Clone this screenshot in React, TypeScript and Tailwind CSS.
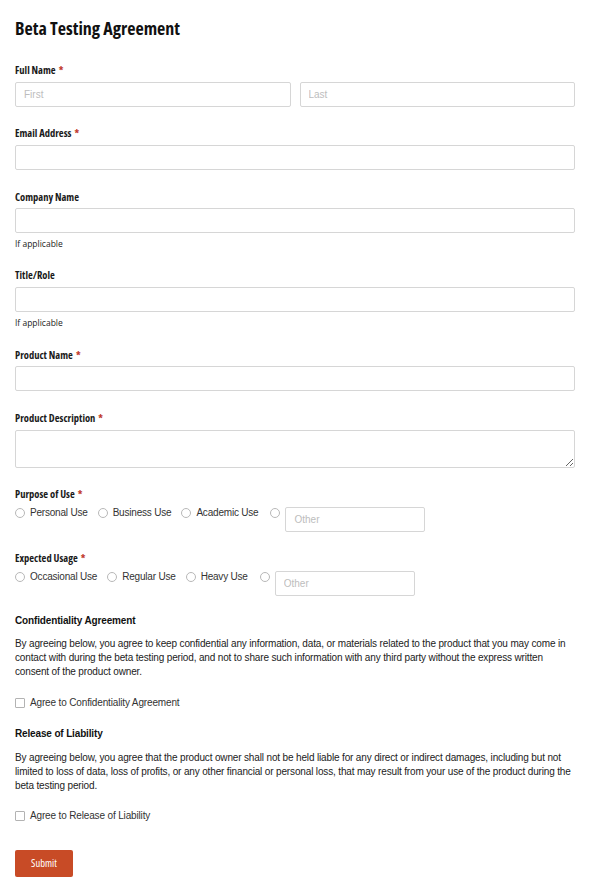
import React from "react";

const labelCls =
  "block text-[10.5px] leading-[16px] font-bold text-[#1a1a1a] [font-family:'Open_Sans',sans-serif] [font-stretch:75%]";
const inputCls =
  "block h-[25px] w-full rounded-[2px] border border-[#d6d6d6] bg-white px-[8px] text-[10px] text-[#333] outline-none placeholder:text-[#bdbdbd] [font-family:'Liberation_Sans',Arial,sans-serif]";
const bodyFont = "[font-family:'Liberation_Sans',Arial,sans-serif] tracking-[-0.2px]";
const paraFont = "[font-family:'Liberation_Sans',Arial,sans-serif] tracking-[-0.15px]";

function Req() {
  return <span className="ml-[3px] text-[#c0392b]">*</span>;
}

function Radio({ label }: { label: string }) {
  return (
    <label className={`flex items-center gap-[5px] text-[10px] leading-[14px] text-[#333] ${bodyFont}`}>
      <span className="inline-block h-[10px] w-[10px] rounded-full border border-[#b8b8b8] bg-white" />
      <span>{label}</span>
    </label>
  );
}

function Check({ label }: { label: string }) {
  return (
    <label className={`flex items-center gap-[5px] text-[10px] leading-[14px] text-[#333] ${paraFont}`}>
      <span className="inline-block h-[10px] w-[10px] rounded-[1px] border border-[#b3b3b3] bg-white" />
      <span>{label}</span>
    </label>
  );
}

export default function App() {
  return (
    <div className="min-h-[892px] w-full bg-white px-[15px] pt-[14px]">
      <h1 className="text-[18px] leading-[28px] font-bold text-[#111] [font-family:'Open_Sans',sans-serif] [font-stretch:75%]">
        Beta Testing Agreement
      </h1>

      <div className="mt-[20px]">
        <span className={labelCls}>
          Full Name<Req />
        </span>
        <div className="mt-[4px] flex gap-[9px]">
          <input className={inputCls} placeholder="First" />
          <input className={inputCls} placeholder="Last" />
        </div>
      </div>

      <div className="mt-[18px]">
        <span className={labelCls}>
          Email Address<Req />
        </span>
        <input className={`mt-[4px] ${inputCls}`} />
      </div>

      <div className="mt-[19px]">
        <span className={labelCls}>Company Name</span>
        <input className={`mt-[3px] ${inputCls}`} />
        <p className="mt-[5px] text-[8.5px] leading-[12px] text-[#222] [font-family:'Open_Sans',sans-serif]">If applicable</p>
      </div>

      <div className="mt-[17px]">
        <span className={labelCls}>Title/Role</span>
        <input className={`mt-[4px] ${inputCls}`} />
        <p className="mt-[5px] text-[8.5px] leading-[12px] text-[#222] [font-family:'Open_Sans',sans-serif]">If applicable</p>
      </div>

      <div className="mt-[18px]">
        <span className={labelCls}>
          Product Name<Req />
        </span>
        <input className={`mt-[3px] ${inputCls}`} />
      </div>

      <div className="mt-[19px]">
        <span className={labelCls}>
          Product Description<Req />
        </span>
        <textarea className="mt-[4px] block h-[38px] w-full resize-y rounded-[2px] border border-[#d6d6d6] bg-white px-[8px] py-[4px] text-[10px] outline-none" />
      </div>

      <div className="mt-[18px]">
        <span className={labelCls}>
          Purpose of Use<Req />
        </span>
        <div className="mt-[5px] flex items-start">
          <div className="mt-[-1px] flex gap-[10px]">
            <Radio label="Personal Use" />
            <Radio label="Business Use" />
            <Radio label="Academic Use" />
          </div>
          <div className="ml-[12px] flex items-start gap-[5px]">
            <span className="mt-[1px] inline-block h-[10px] w-[10px] shrink-0 rounded-full border border-[#b8b8b8] bg-white" />
            <input className={`!w-[140px] ${inputCls}`} placeholder="Other" />
          </div>
        </div>
      </div>

      <div className="mt-[18px]">
        <span className={labelCls}>
          Expected Usage<Req />
        </span>
        <div className="mt-[5px] flex items-start">
          <div className="mt-[-1px] flex gap-[10px]">
            <Radio label="Occasional Use" />
            <Radio label="Regular Use" />
            <Radio label="Heavy Use" />
          </div>
          <div className="ml-[12px] flex items-start gap-[5px]">
            <span className="mt-[1px] inline-block h-[10px] w-[10px] shrink-0 rounded-full border border-[#b8b8b8] bg-white" />
            <input className={`!w-[140px] ${inputCls}`} placeholder="Other" />
          </div>
        </div>
      </div>

      <div className={`mt-[18px] ${paraFont} text-[#222]`}>
        <h2 className="text-[10px] leading-[14px] font-bold text-[#111]">Confidentiality Agreement</h2>
        <p className="mt-[9px] text-[10px] leading-[14px]">
          By agreeing below, you agree to keep confidential any information, data, or materials related to the product that you may come in contact with during the beta testing period, and not to share such information with any third party without the express written consent of the product owner.
        </p>
        <div className="mt-[17px]">
          <Check label="Agree to Confidentiality Agreement" />
        </div>
      </div>

      <div className={`mt-[17px] ${paraFont} text-[#222]`}>
        <h2 className="text-[10px] leading-[14px] font-bold text-[#111]">Release of Liability</h2>
        <p className="mt-[10px] text-[10px] leading-[14px]">
          By agreeing below, you agree that the product owner shall not be held liable for any direct or indirect damages, including but not limited to loss of data, loss of profits, or any other financial or personal loss, that may result from your use of the product during the beta testing period.
        </p>
        <div className="mt-[16px]">
          <Check label="Agree to Release of Liability" />
        </div>
      </div>

      <button className="mt-[27px] h-[27px] w-[58px] rounded-[2px] bg-[#c84b26] text-[10.5px] text-white [font-family:'Open_Sans',sans-serif] [font-stretch:75%]">
        Submit
      </button>
    </div>
  );
}
